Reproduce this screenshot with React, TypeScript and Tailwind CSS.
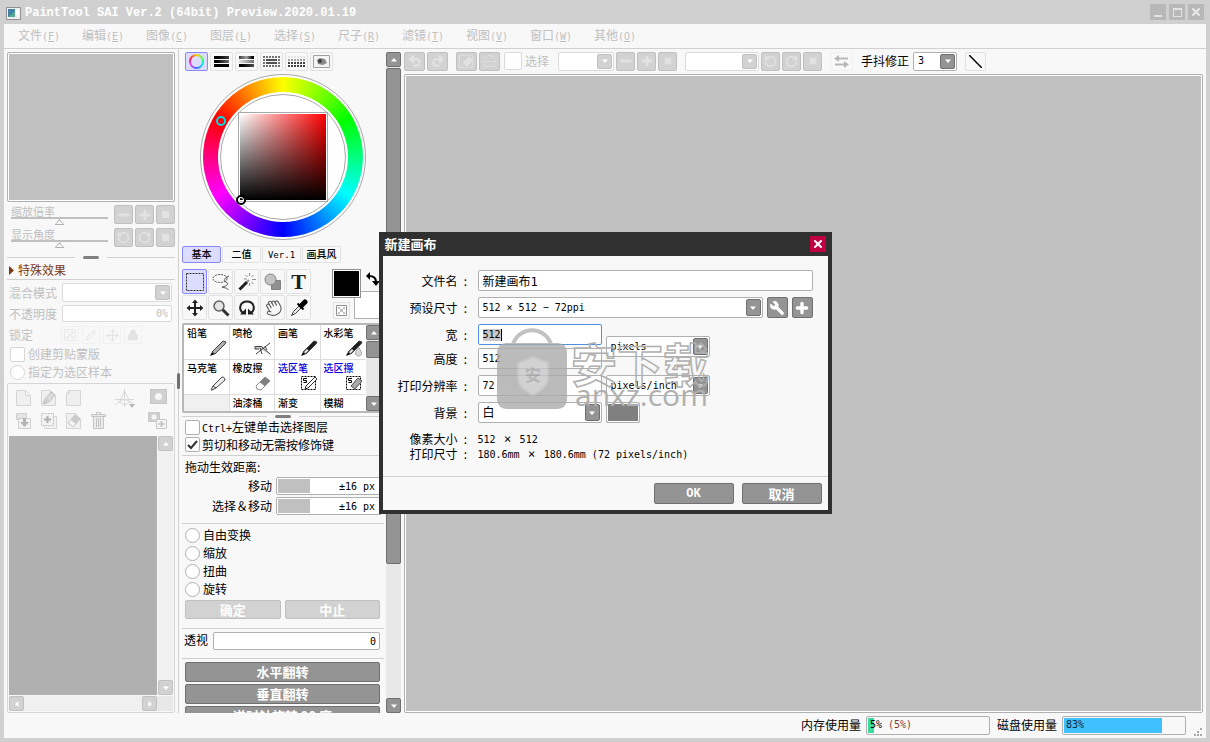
import type { ReactNode } from 'react'
import clsx from 'clsx'
import {
  Hand,
  Lock,
  Minus,
  Move,
  Pencil,
  Plus,
  RotateCcw,
  RotateCw,
  Square,
  Undo2,
  Redo2,
  Wrench,
  X,
} from 'lucide-react'

const menus = [
  ['文件', 'F'],
  ['编辑', 'E'],
  ['图像', 'C'],
  ['图层', 'L'],
  ['选择', 'S'],
  ['尺子', 'R'],
  ['滤镜', 'T'],
  ['视图', 'V'],
  ['窗口', 'W'],
  ['其他', 'O'],
]

function Mono({ children }: { children: ReactNode }) {
  return (
    <span className="font-['DejaVu_Sans_Mono',monospace] text-[10px] whitespace-pre">
      {children}
    </span>
  )
}

function Times() {
  return (
    <span className="inline-block w-3 text-center font-['DejaVu_Sans_Mono',monospace] text-[12px]">
      ×
    </span>
  )
}

function Arrow({ dir = 'down' }: { dir?: 'up' | 'down' | 'left' | 'right' }) {
  return (
    <svg
      viewBox="0 0 6 6"
      className={clsx(
        'size-1.5 shrink-0 fill-white',
        dir === 'up' && 'rotate-180',
        dir === 'left' && 'rotate-90',
        dir === 'right' && '-rotate-90'
      )}
    >
      <path d="M0 1.500h6L3 5z" />
    </svg>
  )
}

function IconButton({
  label,
  active,
  className,
  children,
}: {
  label: string
  active?: boolean
  className?: string
  children: ReactNode
}) {
  return (
    <button
      aria-label={label}
      className={clsx(
        'flex shrink-0 items-center justify-center rounded-xs border',
        active
          ? 'border-[#707070] bg-[#949494] text-white'
          : 'border-[#c0c0c0] bg-[#d2d2d2] text-[#e2e2e2]',
        className
      )}
    >
      {children}
    </button>
  )
}

function Select({
  label,
  value,
  active,
  className,
}: {
  label: string
  value: string
  active?: boolean
  className?: string
}) {
  return (
    <div className={clsx('relative shrink-0', className)}>
      <select
        aria-label={label}
        className={clsx(
          "block size-full appearance-none rounded-xs border bg-white pl-1 font-['DejaVu_Sans_Mono','Noto_Sans_CJK_SC',monospace]",
          value === '白' ? 'text-[12px]' : 'text-[10px]',
          active ? 'border-[#b0b0b0]' : 'border-[#dadada]'
        )}
      >
        <option>{value}</option>
      </select>
      <span
        className={clsx(
          'pointer-events-none absolute inset-y-0.5 right-0.5 flex w-[15px] items-center justify-center rounded-xs border',
          active ? 'border-[#707070] bg-[#949494]' : 'border-[#c0c0c0] bg-[#d2d2d2]'
        )}
      >
        <Arrow />
      </span>
    </div>
  )
}

function Splitter() {
  return (
    <div className="flex h-[7px] items-center gap-2">
      <div className="h-px flex-1 bg-[#d0d0d0]" />
      <div className="h-[3px] w-4 rounded-full bg-[#808080]" />
      <div className="h-px flex-1 bg-[#d0d0d0]" />
    </div>
  )
}

function ViewSlider({ label, rotate }: { label: string; rotate?: boolean }) {
  return (
    <div className="flex h-[23px] items-start justify-between pl-1">
      <label className="block w-[97px] text-[11px] leading-3 text-[#c0c0c0]">
        {label}
        <input
          type="range"
          className="block h-0.5 w-full appearance-none bg-[#c0c0c0] [&::-webkit-slider-thumb]:h-1.5 [&::-webkit-slider-thumb]:w-2.5 [&::-webkit-slider-thumb]:translate-y-1 [&::-webkit-slider-thumb]:appearance-none [&::-webkit-slider-thumb]:bg-[#b0b0b0] [&::-webkit-slider-thumb]:[clip-path:polygon(50%_0,100%_100%,0_100%,10%_85%,85%_85%,50%_25%,15%_85%,0_100%)]"
        />
      </label>
      <div className="flex gap-0.5">
        <IconButton label={rotate ? '左旋转' : '缩小'} className="size-[19px]">
          {rotate ? <RotateCcw size={13} strokeWidth={3} /> : <Minus size={14} strokeWidth={5} />}
        </IconButton>
        <IconButton label={rotate ? '右旋转' : '放大'} className="size-[19px]">
          {rotate ? <RotateCw size={13} strokeWidth={3} /> : <Plus size={14} strokeWidth={5} />}
        </IconButton>
        <IconButton label="重置" className="size-[19px]">
          <span className="size-[7px] bg-current" />
        </IconButton>
      </div>
    </div>
  )
}

function Page({ children }: { children?: ReactNode }) {
  return (
    <svg viewBox="0 0 18 18" className="size-[18px] fill-[#f0f0f0] stroke-[#d6d6d6]">
      <path d="M1.500 1.500h9l5 5v10h-14zM10.500 1.500v5h5" />
      {children}
    </svg>
  )
}

function LayerTools() {
  return (
    <div className="flex h-[51px] justify-between px-[6px] pt-1">
      <div className="grid grid-cols-[repeat(4,25px)] content-start gap-y-[5px]">
        <button aria-label="新建图层" className="size-[18px]">
          <Page />
        </button>
        <button aria-label="新建线稿图层" className="size-[18px]">
          <Page>
            <path d="M3 15l2-5 6-7 4 3-6 7-5 2 4-5" className="fill-[#dcdcdc] stroke-[#bcbcbc]" />
          </Page>
        </button>
        <button aria-label="新建图层组" className="size-[18px]">
          <svg viewBox="0 0 18 18" className="size-[18px] fill-[#efefef] stroke-[#d6d6d6]">
            <path d="M1.500 4.500l2-3h12v15h-14zM4.500 1.500v3h-3" />
          </svg>
        </button>
        <span />
        <button aria-label="向下合并" className="size-[18px]">
          <svg viewBox="0 0 18 18" className="size-[18px] fill-[#e4e4e4] stroke-[#d0d0d0]">
            <path d="M1.500 1.500h10v6h-10z" />
            <path d="M3.500 6.500h12v10h-12z" className="fill-[#f2f2f2]" />
            <path d="M8 6h3v4h3l-4.500 5L5 10h3z" className="fill-[#b4b4b4] stroke-none" />
          </svg>
        </button>
        <button aria-label="复制图层" className="size-[18px]">
          <svg viewBox="0 0 18 18" className="size-[18px] fill-[#f2f2f2] stroke-[#d6d6d6]">
            <path d="M4.500 4.500h12v12h-12z" />
            <path d="M1.500 1.500h12v12h-12z" strokeDasharray="2 1" className="stroke-[#c0c0c0]" />
            <path d="M7.500 4v7M4 7.500h7" strokeWidth="2" className="stroke-[#b0b0b0]" />
          </svg>
        </button>
        <button aria-label="清除图层" className="size-[18px]">
          <Page>
            <path d="M3 11l7-8 5 4-7 8z" className="fill-[#f4f4f4] stroke-[#c4c4c4]" />
            <path d="M6 8l4-5 5 4-4 5z" className="fill-[#cacaca] stroke-none" />
          </Page>
        </button>
        <button aria-label="删除图层" className="size-[18px]">
          <svg viewBox="0 0 18 18" className="size-[18px] fill-[#ececec] stroke-[#c4c4c4]">
            <path d="M6.500 2V.500h4V2" fill="none" />
            <path d="M1.500 2.500h14v2h-14z" />
            <path d="M3.500 4.500h10v12h-10z" />
            <path d="M6.500 6v9M8.500 6v9M10.500 6v9" />
          </svg>
        </button>
      </div>
      <div className="flex gap-[13px]">
        <svg viewBox="0 0 20 20" className="size-5 fill-none stroke-[#d8d8d8]">
          <path d="M9.500 0v18M0 10.500h19M9.500 2L5 12l-5 4M9.500 2l5 10 5 4M4 13l5.500-3 5.500 3-5.500 3z" />
          <path d="M14 15h6l-3 4z" className="fill-[#b8b8b8] stroke-none" />
        </svg>
        <div className="flex flex-col items-end gap-2">
          <button aria-label="图层蒙版" className="flex h-[15px] w-[17px] items-center justify-center border border-[#c6c6c6] bg-[#d0d0d0]">
            <span className="size-[7px] rounded-full bg-[#f6f6f6]" />
          </button>
          <svg viewBox="0 0 19 17" className="h-[17px] w-[19px] fill-[#d0d0d0] stroke-[#c8c8c8]">
            <path d="M.5.5h11v9H.5z" />
            <circle cx="6" cy="5" r="2.500" className="fill-[#f6f6f6] stroke-none" />
            <path d="M8.500 7.500h10v9h-10z" className="fill-[#f4f4f4]" />
            <path d="M13.500 9v6M10.500 12h6" strokeWidth="2" />
          </svg>
        </div>
      </div>
    </div>
  )
}

function LeftPanel() {
  return (
    <aside className="relative flex w-[175px] shrink-0 flex-col border-r border-[#d0d0d0] px-[3px] pt-[3px] text-[#c0c0c0]">
      <div className="h-[150px] shrink-0 rounded-xs border border-[#b0b0b0] bg-[#c0c0c0] outline-1 -outline-offset-2 outline-white" />
      <div className="mt-[3px]">
        <ViewSlider label="缩放倍率" />
        <ViewSlider label="显示角度" rotate />
      </div>
      <div className="mt-[3px]">
        <Splitter />
      </div>
      <button className="flex h-[19px] items-center gap-1 border-b border-[#d0d0d0] pl-0.5 text-left text-[12px] leading-3 text-[#7a3a14]">
        <svg viewBox="0 0 5 9" className="h-[9px] w-[5px] fill-current">
          <path d="M0 0l5 4.500L0 9z" />
        </svg>
        特殊效果
      </button>
      <div className="mt-[3px] flex h-[19px] items-center justify-between pr-[3px] pl-0.5">
        <span>混合模式</span>
        <Select label="混合模式" value="" className="h-[19px] w-[110px]" />
      </div>
      <label className="mt-[3px] flex h-[17px] items-center justify-between pr-[3px] pl-0.5">
        不透明度
        <input
          defaultValue="0%"
          className="h-[17px] w-[110px] rounded-xs border border-[#dadada] bg-white pr-[3px] text-right font-['DejaVu_Sans_Mono',monospace] text-[10px]"
        />
      </label>
      <div className="mt-[3px] flex h-5 items-center pl-0.5">
        锁定
        <div className="ml-7 flex gap-[3px] text-[#e4e4e4]">
          <button aria-label="锁定透明" className="flex size-[18px] items-center justify-center border border-[#f1f1f1]">
            <svg viewBox="0 0 12 12" className="size-3 fill-[#ebebeb] stroke-[#e8e8e8]">
              <path d="M.5.5h11v11H.5z" className="fill-none" />
              <path d="M2 2h2v2H2zM7 2h3v3H7zM4.500 4.500h3v3h-3zM2 7h3v3H2zM7 7h3v3H7z" className="stroke-none" />
            </svg>
          </button>
          <button aria-label="锁定绘画" className="flex size-[18px] items-center justify-center border border-[#f1f1f1]">
            <Pencil size={12} />
          </button>
          <button aria-label="锁定移动" className="flex size-[18px] items-center justify-center border border-[#f1f1f1]">
            <Move size={13} />
          </button>
          <button aria-label="全部锁定" className="flex size-[18px] items-center justify-center border border-[#f1f1f1]">
            <Lock size={12} fill="currentColor" />
          </button>
        </div>
      </div>
      <label className="flex h-[18px] items-center gap-[3px] pl-[3px]">
        <input type="checkbox" className="size-[15px] appearance-none rounded-xs border border-[#d6d6d6] bg-white" />
        创建剪贴蒙版
      </label>
      <label className="flex h-[18px] items-center gap-[3px] pl-[3px]">
        <input type="radio" className="size-[15px] appearance-none rounded-full border border-[#d6d6d6] bg-white" />
        指定为选区样本
      </label>
      <div className="mt-[2px] flex min-h-0 flex-1 flex-col rounded-xs border border-[#d6d6d6] p-px">
        <LayerTools />
        <div className="flex min-h-0 flex-1">
          <div className="flex-1 bg-[#b0b0b0]" />
          <div className="ml-px flex w-[15px] flex-col justify-between bg-[#f0f0f0]">
            <IconButton label="向上" className="size-[15px]">
              <Arrow dir="up" />
            </IconButton>
            <IconButton label="向下" className="size-[15px]">
              <Arrow />
            </IconButton>
          </div>
        </div>
        <div className="mt-px flex h-[15px]">
          <div className="flex flex-1 justify-between bg-[#f0f0f0]">
            <IconButton label="向左" className="size-[15px]">
              <Arrow dir="left" />
            </IconButton>
            <IconButton label="向右" className="size-[15px]">
              <Arrow dir="right" />
            </IconButton>
          </div>
          <div className="w-4 bg-[#e8e8e8]" />
        </div>
      </div>
      <div className="absolute top-[324px] -right-[2px] h-4 w-[3px] rounded-full bg-[#707070]" />
    </aside>
  )
}

function ColorWheel() {
  return (
    <div className="relative mx-auto mt-[2px] flex size-[168px] items-center justify-center">
      <div className="flex size-[166px] items-center justify-center rounded-full border border-[#a8a8a8] bg-white">
        <div className="flex size-40 items-center justify-center rounded-full bg-[conic-gradient(#ff0,#0f0,#0ff,#00f,#f0f,#f00,#ff0)]">
          <div className="flex size-[130px] items-center justify-center rounded-full bg-white">
            <div className="flex size-[126px] items-center justify-center rounded-full border border-[#a8a8a8]">
              <div className="size-[90px] shrink-0 border border-[#a8a8a8] bg-white p-px">
                <div className="size-full bg-[linear-gradient(to_top,#000,transparent),linear-gradient(to_right,#fff,#f00)]" />
              </div>
            </div>
          </div>
        </div>
      </div>
      <div className="absolute top-[43px] left-[17px] size-[10px] rounded-full border-2 border-[#00dce8]" />
      <div className="absolute top-[122px] left-[37px] size-[10px] rounded-full border-2 border-black outline-1 -outline-offset-3 outline-white" />
    </div>
  )
}

const colorModes: [string, ReactNode][] = [
  [
    '色轮',
    <span className="flex size-[15px] items-center justify-center rounded-full bg-[conic-gradient(#fc0,#4f4,#0df,#46f,#d4f,#f24,#fc0)]">
      <span className="size-[11px] rounded-full bg-[#dcdcff]" />
    </span>,
  ],
  [
    'RGB滑块',
    <span className="flex w-[15px] flex-col gap-px">
      <span className="h-[3px] bg-linear-to-r from-black to-neutral-700" />
      <span className="h-[3px] bg-linear-to-r from-black to-neutral-500" />
      <span className="h-[3px] bg-black" />
    </span>,
  ],
  [
    'HSV滑块',
    <span className="flex w-[15px] flex-col gap-px">
      <span className="h-[3px] bg-linear-to-r from-neutral-700 via-neutral-400 to-black" />
      <span className="h-[3px] bg-linear-to-r from-neutral-200 to-neutral-500" />
      <span className="h-[3px] bg-linear-to-r from-black to-neutral-600" />
    </span>,
  ],
  [
    '中间色',
    <svg viewBox="0 0 17 11" className="h-[11px] w-[17px]">
      <path d="M0 1h17M0 10h17" strokeWidth="2" strokeDasharray="2 1" className="stroke-neutral-500" />
      <path d="M0 4h2M15 4h2M0 7h2M15 7h2" strokeWidth="2" className="stroke-neutral-500" />
      <path d="M3 4h11M3 7h11" strokeWidth="2" className="stroke-neutral-600" />
    </svg>,
  ],
  [
    '色板',
    <svg viewBox="0 0 17 11" className="h-[11px] w-[17px]">
      <path d="M0 1h17" strokeWidth="2" strokeDasharray="2 1" className="stroke-neutral-200" />
      <path d="M0 4h17" strokeWidth="2" strokeDasharray="2 1" className="stroke-neutral-400" />
      <path d="M0 7h17M0 10h17" strokeWidth="2" strokeDasharray="2 1" className="stroke-neutral-700" />
    </svg>,
  ],
  [
    '调色盘',
    <svg viewBox="0 0 17 13" className="h-[13px] w-[17px]">
      <path d="M.5.5h16v12H.5z" className="fill-[#f4f4f4] stroke-[#a0a0a0]" />
      <path d="M4 5l3-2 5 1 2 4-4 2-5-1z" className="fill-[#8a8a8a]" />
      <circle cx="7" cy="6" r="2" className="fill-[#404040]" />
    </svg>,
  ],
]

const tools: [string, ReactNode][] = [
  [
    '矩形选择',
    <svg viewBox="0 0 18 18" className="size-[18px] fill-none stroke-[#303030]">
      <path d="M.5.5h17v17H.5z" strokeDasharray="2 1" />
    </svg>,
  ],
  [
    '套索',
    <svg viewBox="0 0 18 18" className="size-[18px] fill-none stroke-[#505050]">
      <ellipse cx="8" cy="5.500" rx="7" ry="4" strokeDasharray="2 1" />
      <path d="M17 3c-5 2-6 5-3 6s2 4-4 5c3 1 6 1 6 3" />
    </svg>,
  ],
  [
    '魔棒',
    <svg viewBox="0 0 18 18" className="size-[18px] fill-none stroke-[#202020]">
      <path d="M1.500 16.500L9 9" strokeWidth="3" />
      <path d="M9 9l2-2" strokeWidth="2" className="stroke-[#909090]" />
      <path d="M11.500 0v3M11.500 10v3M6 6h3M14 6.500h4M7.500 2l2 2M15.500 2l-2 2M13.500 9l2 2" className="stroke-[#909090]" />
    </svg>,
  ],
  [
    '形状',
    <svg viewBox="0 0 18 18" className="size-[18px] stroke-[#808080]">
      <path d="M7.500 7.500h9v9h-9z" className="fill-[#909090]" />
      <circle cx="6.500" cy="6.500" r="5.500" className="fill-[#c4c4c4]" />
    </svg>,
  ],
  ['文字', <span className="font-['Liberation_Serif',serif] text-[22px] leading-none font-bold">T</span>],
  [
    '移动',
    <svg viewBox="0 0 18 18" className="size-[18px] fill-[#202020] stroke-[#202020]">
      <path d="M9 2v14M2 9h14" strokeWidth="2" />
      <path d="M9 .5L12 4H6zM9 17.500L12 14H6zM.5 9L4 6v6zM17.500 9L14 6v6z" className="stroke-none" />
    </svg>,
  ],
  [
    '缩放',
    <svg viewBox="0 0 18 18" className="size-[18px]">
      <path d="M10 10l6.500 6.500" strokeWidth="3" className="stroke-[#303030]" />
      <circle cx="7" cy="7" r="5" strokeWidth="1.500" className="fill-[#e4e4e4] stroke-[#606060]" />
    </svg>,
  ],
  [
    '旋转',
    <svg viewBox="0 0 18 18" className="size-[18px]">
      <path d="M5 14C0 10 2 2.500 9 2.500s9 7.500 4 11.500" fill="none" strokeWidth="2" className="stroke-[#202020]" />
      <path d="M2 15.500h6v-6zM16 15.500h-6v-6z" className="fill-[#202020]" />
    </svg>,
  ],
  ['抓手', <Hand size={18} strokeWidth={1.500} color="#606060" className="-rotate-30" />],
  [
    '吸管',
    <svg viewBox="0 0 18 18" className="size-[18px]">
      <path d="M1.500 16.500l2-4 6-6 2 2-6 6z" className="fill-[#e8e8e8] stroke-[#404040]" />
      <path d="M7.500 4.500l6 6" strokeWidth="2" className="stroke-black" />
      <path d="M11.500 6.500L15 3" strokeWidth="5" strokeLinecap="round" className="stroke-black" />
    </svg>,
  ],
]

function PenIcon({ dark, drop }: { dark?: boolean; drop?: boolean }) {
  return (
    <svg viewBox="0 0 18 18" className="size-[18px]">
      <path d="M1 17l2-4 3 2z" className="fill-black" />
      <path
        d="M3 13L14 2l3 1-1 2L6 15z"
        className={clsx(dark ? 'fill-[#202020]' : 'fill-[#b0b0b0]', 'stroke-[#404040]')}
      />
      {dark && <path d="M4 13l3-3 1.500 1.500-3 3z" className="fill-[#e8e8e8]" />}
      {drop && <path d="M13.500 8c-5 7-3 9 0 9s5-2 0-9z" className="fill-[#d8d8d8] stroke-[#a8a8a8]" />}
    </svg>
  )
}

function SelIcon({ eraser }: { eraser?: boolean }) {
  return (
    <svg viewBox="0 0 18 18" className="size-[18px] fill-none stroke-black">
      <path d="M1.500 2.500h14v13h-14z" strokeDasharray="2 1" />
      <path d="M7 4.500H3.500v2h3v2h-3" />
      {eraser ? (
        <path d="M6 12l7-8 4 3-7 8z" className="fill-[#a8a8a8] stroke-[#505050]" />
      ) : (
        <path d="M5 15l1-3 9-9 2 2-9 9z" className="fill-white stroke-[#303030]" />
      )}
    </svg>
  )
}

const brushes: { name: string; icon?: ReactNode; sel?: boolean }[] = [
  { name: '铅笔', icon: <PenIcon /> },
  {
    name: '喷枪',
    icon: (
      <svg viewBox="0 0 18 18" className="size-[18px] fill-[#c8c8c8] stroke-[#404040]">
        <path d="M1.500 7.500h6l9 8M2 15L16 4M6 9l2 6M1 7v3h4M11 7l2 4" />
      </svg>
    ),
  },
  { name: '画笔', icon: <PenIcon dark /> },
  { name: '水彩笔', icon: <PenIcon dark drop /> },
  {
    name: '马克笔',
    icon: (
      <svg viewBox="0 0 18 18" className="size-[18px] fill-[#f0f0f0] stroke-[#404040]">
        <path d="M2 16l2-4 9-9c2 0 3 1 3 3l-9 8-4 2zM4 12l3 2" />
      </svg>
    ),
  },
  {
    name: '橡皮擦',
    icon: (
      <svg viewBox="0 0 18 18" className="size-[18px] fill-white stroke-[#909090]">
        <path d="M2 12l9-9 5 4-9 9-4-1z" />
        <path d="M6 8l5-5 5 4-5 5z" className="fill-[#808080]" />
      </svg>
    ),
  },
  { name: '选区笔', icon: <SelIcon />, sel: true },
  { name: '选区擦', icon: <SelIcon eraser />, sel: true },
  { name: '' },
  { name: '油漆桶' },
  { name: '渐变' },
  { name: '模糊' },
]

function DistanceField({ label }: { label: string }) {
  return (
    <label className="mb-0.5 flex h-[18px] items-center justify-end gap-1">
      {label}
      <input
        defaultValue="±16 px"
        className="h-[18px] w-[106px] rounded-xs border border-[#b0b0b0] bg-white bg-[linear-gradient(#c0c0c0,#c0c0c0)] bg-[length:32px_14px] bg-[position:1px_1px] bg-no-repeat pr-1.5 text-right font-['DejaVu_Sans_Mono',monospace] text-[10px]"
      />
    </label>
  )
}

function ToolPanel() {
  return (
    <section className="flex w-[225px] shrink-0 pt-[3px] pl-[3px]">
      <div className="w-[202px] overflow-hidden">
        <div className="flex gap-[2px] pl-[3px]">
          {colorModes.map(([label, icon], i) => (
            <button
              key={label}
              aria-label={label}
              className={clsx(
                'flex h-[19px] w-[23px] items-center justify-center rounded-xs border',
                i === 0 ? 'border-[#8888f8] bg-[#dcdcff]' : 'border-[#e2e2e2]'
              )}
            >
              {icon}
            </button>
          ))}
        </div>
        <ColorWheel />
        <div className="mt-[5px] flex gap-px">
          {['基本', '二值', 'Ver.1', '画具风'].map((tab, i) => (
            <button
              key={tab}
              className={clsx(
                "h-[17px] w-[39px] rounded-xs border font-['DejaVu_Sans_Mono','Noto_Sans_CJK_SC',monospace] leading-3 font-medium",
                tab === 'Ver.1' ? 'text-[9px]' : 'text-[10px]',
                i === 0 ? 'border-[#8888f8] bg-[#dcdcff]' : 'border-[#e2e2e2]'
              )}
            >
              {tab}
            </button>
          ))}
        </div>
        <div className="mt-1.5 flex h-[51px] items-start">
          <div className="grid grid-cols-[repeat(5,25px)] gap-px">
            {tools.map(([label, icon], i) => (
              <button
                key={label}
                aria-label={label}
                className={clsx(
                  'flex size-[25px] items-center justify-center rounded-xs border text-[#202020]',
                  i === 0 ? 'border-[#8888f8] bg-[#dcdcff]' : 'border-[#e2e2e2]'
                )}
              >
                {icon}
              </button>
            ))}
          </div>
          <div className="relative ml-[21px] h-[51px] flex-1">
            <div className="absolute top-[22px] left-[22px] size-7 border border-[#b0b0b0] bg-white" />
            <div className="relative size-[29px] border border-[#909090] bg-black outline-1 -outline-offset-2 outline-white" />
            <button aria-label="交换颜色" className="absolute top-[3px] left-[34px]">
              <svg viewBox="0 0 14 14" className="size-[14px] fill-black">
                <path d="M0 4l4-4v8zM6 9h8l-4 5z" />
                <path d="M3 4c5 0 7 2 7 6" fill="none" stroke="#000" strokeWidth="2" />
              </svg>
            </button>
            <button aria-label="透明色" className="absolute top-[33px] left-px flex size-[17px] items-center justify-center border border-[#e2e2e2] bg-[#f8f8f8]">
              <svg viewBox="0 0 11 11" className="size-[11px]">
                <path d="M.5.5h10v10H.5z" className="fill-white stroke-[#909090]" />
                <path d="M2 2h2v2H2zM7 2h2v2H7zM4 4h3v3H4zM2 7h2v2H2zM7 7h2v2H7z" className="fill-[#c0c0c0]" />
              </svg>
            </button>
          </div>
        </div>
        <div className="mt-[3px] flex h-[90px] rounded-xs border-2 border-[#b8b8b8] bg-white">
          <div className="grid h-full flex-1 auto-rows-[34px] grid-cols-4 gap-px overflow-hidden bg-[#dcdcdc]">
            {brushes.map((b) => (
              <button
                key={b.name}
                className={clsx(
                  'relative flex items-start pl-[3px] text-left text-[10px] leading-4 font-medium',
                  b.name ? 'bg-white' : 'bg-[#f0f0f0]',
                  b.sel && 'text-[#0000e0]'
                )}
              >
                {b.name}
                <span className="absolute right-0.5 bottom-0.5">{b.icon}</span>
              </button>
            ))}
          </div>
          <div className="ml-px flex w-4 flex-col bg-[#e8e8e8]">
            <IconButton label="向上" active className="h-[15px]">
              <Arrow dir="up" />
            </IconButton>
            <div className="mt-px h-[17px] rounded-xs border border-[#707070] bg-[#949494]" />
            <IconButton label="向下" active className="mt-auto h-[15px]">
              <Arrow />
            </IconButton>
          </div>
        </div>
        <Splitter />
        <div className="pr-1 pl-[3px]">
          <label className="flex h-[15px] items-center gap-0.5">
            <input type="checkbox" className="size-[15px] appearance-none rounded-xs border border-[#b0b0b0] bg-white" />
            <span>
              <Mono>Ctrl+</Mono>左键单击选择图层
            </span>
          </label>
          <label className="mt-[2px] flex h-[15px] items-center gap-0.5">
            <input
              type="checkbox"
              defaultChecked
              className="size-[15px] appearance-none rounded-xs border border-[#b0b0b0] bg-white"
            />
            <svg viewBox="0 0 15 15" className="pointer-events-none -ml-[17px] size-[15px] fill-none stroke-[#303030]" strokeWidth="2">
              <path d="M3 8l3 3 6-7" />
            </svg>
            剪切和移动无需按修饰键
          </label>
        </div>
        <div className="mt-[3px] h-[69px] border-y border-[#d0d0d0] pr-[2px] pl-[3px]">
          <p className="h-[21px] leading-[21px]">拖动生效距离:</p>
          <DistanceField label="移动" />
          <DistanceField label="选择＆移动" />
        </div>
        <div className="mt-[2px] h-[103px] border-b border-[#d0d0d0] pr-1 pl-[3px]">
          {['自由变换', '缩放', '扭曲', '旋转'].map((mode) => (
            <label key={mode} className="flex h-[18px] items-center gap-[3px]">
              <input
                type="radio"
                name="transform"
                className="size-[15px] appearance-none rounded-full border border-[#b0b0b0] bg-white"
              />
              {mode}
            </label>
          ))}
          <div className="mt-[2px] flex gap-1">
            {['确定', '中止'].map((t) => (
              <button
                key={t}
                className="h-[19px] flex-1 rounded-xs border border-[#c0c0c0] bg-[#d2d2d2] text-[13px] leading-4 font-bold text-white"
              >
                {t}
              </button>
            ))}
          </div>
        </div>
        <label className="flex h-[30px] items-start gap-[5px] border-b border-[#d0d0d0] pt-[3px] pr-1 pl-0.5">
          透视
          <input
            defaultValue="0"
            className="h-[18px] min-w-0 flex-1 rounded-xs border border-[#b0b0b0] bg-white pr-[3px] text-right font-['DejaVu_Sans_Mono',monospace] text-[10px]"
          />
        </label>
        <div className="mt-[3px] flex flex-col gap-0.5 pr-1 pl-[3px]">
          {['水平翻转', '垂直翻转', '逆时针旋转 90 度'].map((t) => (
            <button
              key={t}
              className="h-5 rounded-xs border border-[#707070] bg-[#949494] text-[13px] leading-[18px] font-bold text-white"
            >
              {t}
            </button>
          ))}
        </div>
      </div>
      <div className="ml-[2px] flex w-[15px] flex-col bg-[#e8e8e8]">
        <IconButton label="向上" active className="size-[15px]">
          <Arrow dir="up" />
        </IconButton>
        <div className="mt-px h-3/4 rounded-xs border border-[#707070] bg-[#949494]" />
        <IconButton label="向下" active className="mt-auto size-[15px]">
          <Arrow />
        </IconButton>
      </div>
    </section>
  )
}

function Toolbar() {
  return (
    <div className="flex h-[25px] items-center pb-px">
      <div className="flex gap-0.5">
        <IconButton label="撤销" className="h-[19px] w-[21px]">
          <Undo2 size={14} strokeWidth={4} />
        </IconButton>
        <IconButton label="重做" className="h-[19px] w-[21px]">
          <Redo2 size={14} strokeWidth={4} />
        </IconButton>
      </div>
      <div className="ml-2 flex gap-0.5">
        <IconButton label="取消选择" className="h-[19px] w-[21px]">
          <svg viewBox="0 0 15 13" className="h-[13px] w-[15px] fill-none stroke-current">
            <path d="M.5.5h13v12H.5z" strokeDasharray="2 1" />
            <path d="M4 8l6-6 4 3-6 6z" className="fill-current" />
          </svg>
        </IconButton>
        <IconButton label="反选" className="h-[19px] w-[21px]">
          <svg viewBox="0 0 15 13" className="h-[13px] w-[15px] fill-none stroke-current">
            <path d="M0 6.500h15" strokeDasharray="2 1" />
            <path d="M2.500 4.500a5 4 0 0 1 10 0M2.500 8.500v3h10v-3" strokeDasharray="3 1" />
          </svg>
        </IconButton>
      </div>
      <label className="ml-1 flex items-center gap-[3px] text-[#c0c0c0]">
        <input type="checkbox" className="size-[18px] appearance-none rounded-xs border border-[#dadada] bg-white" />
        选择
      </label>
      <Select label="缩放" value="" className="ml-[9px] h-[19px] w-14" />
      <div className="ml-[2px] flex gap-0.5">
        <IconButton label="缩小" className="size-[19px]">
          <Minus size={14} strokeWidth={5} />
        </IconButton>
        <IconButton label="放大" className="size-[19px]">
          <Plus size={14} strokeWidth={5} />
        </IconButton>
        <IconButton label="重置缩放" className="size-[19px]">
          <Square size={8} fill="currentColor" />
        </IconButton>
      </div>
      <Select label="角度" value="" className="ml-2 h-[19px] w-[74px]" />
      <div className="ml-[2px] flex gap-0.5">
        <IconButton label="左旋转" className="size-[19px]">
          <RotateCcw size={13} strokeWidth={3} />
        </IconButton>
        <IconButton label="右旋转" className="size-[19px]">
          <RotateCw size={13} strokeWidth={3} />
        </IconButton>
        <IconButton label="重置角度" className="size-[19px]">
          <Square size={8} fill="currentColor" />
        </IconButton>
      </div>
      <button aria-label="水平翻转视图" className="ml-2 flex h-[19px] w-[23px] items-center justify-center border border-[#f1f1f1]">
        <svg viewBox="0 0 15 13" className="h-[13px] w-[15px] fill-[#b8b8b8]">
          <path d="M0 3.500L5 0v2.500h9v2H5V7zM15 9.500L10 6v2.500H1v2h9V13z" />
        </svg>
      </button>
      <span className="ml-2">手抖修正</span>
      <Select label="手抖修正" value="3" active className="ml-1 h-[19px] w-11" />
      <button aria-label="直线" className="ml-2 flex h-[19px] w-[21px] items-center justify-center rounded-xs border border-[#e0e0e0]">
        <svg viewBox="0 0 13 13" className="size-[13px] stroke-black">
          <path d="M0 0l13 13" strokeWidth="1.500" />
        </svg>
      </button>
    </div>
  )
}

function StatusBar() {
  return (
    <footer className="flex h-[25px] shrink-0 items-center justify-end pr-[3px] pb-px">
      内存使用量
      <div className="relative ml-[5px] flex h-[19px] w-[124px] items-center rounded-xs border border-[#b0b0b0] p-px">
        <div className="h-full w-[5%] bg-[#38dc98]" />
        <span className="absolute left-[3px] font-['DejaVu_Sans_Mono',monospace] text-[10px] whitespace-pre">
          {'5% '}
          <span className="text-[#804030]">(5%)</span>
        </span>
      </div>
      <span className="ml-[7px]">磁盘使用量</span>
      <div className="relative ml-[5px] flex h-[19px] w-[124px] items-center rounded-xs border border-[#b0b0b0] p-px">
        <div className="h-full w-[82%] bg-[#40c0ff]" />
        <span className="absolute left-[3px] font-['DejaVu_Sans_Mono',monospace] text-[10px] text-[#102840]">83%</span>
      </div>
      <svg viewBox="0 0 9 9" className="ml-2 size-[9px] self-end fill-[#a8a8a8]">
        <path d="M6 0h2v2H6zM3 3h2v2H3zM6 6h2v2H6zM0 6h2v2H0zM3 6h2v2H3z" />
      </svg>
    </footer>
  )
}

function Label({ text }: { text: string }) {
  return (
    <span className="flex w-[87px] shrink-0 justify-end">
      {text}
      <span className="w-5 pr-1 text-center">:</span>
    </span>
  )
}

const field =
  "h-[21px] rounded-xs border border-[#b0b0b0] bg-white pl-1 font-['DejaVu_Sans_Mono','Noto_Sans_CJK_SC',monospace]"

function Watermark() {
  return (
    <svg
      viewBox="0 0 214 84"
      className="pointer-events-none absolute top-[96px] left-[113px] h-[84px] w-[214px]"
    >
      <g className="opacity-80">
        <path d="M17 16a20 20 0 0 1 38 0" fill="none" stroke="#b4b4b4" strokeWidth="4" />
        <rect x="1" y="15" width="70" height="66" rx="9" fill="#ababab" />
        <path d="M37 29l15 6v15c0 8-7 13-15 17-8-4-15-9-15-17V35z" fill="#c8c8c8" stroke="#bbb" strokeWidth="2" />
        <text x="29" y="53" fontSize="16" fontWeight="bold" fill="#a4a4a4" className="font-['Noto_Sans_CJK_SC',sans-serif]">
          安
        </text>
      </g>
      <text x="75" y="54" fontSize="46" fontWeight="bold" fill="none" stroke="#b0b0b0" strokeWidth="1.500" className="font-['Noto_Sans_CJK_SC',sans-serif]">
        安下载
      </text>
      <text x="79" y="78" fontSize="30" fill="#b0b0b0" className="font-['Open_Sans',sans-serif]">
        anxz.com
      </text>
    </svg>
  )
}

function NewCanvasDialog() {
  return (
    <div className="pointer-events-none fixed inset-0 flex items-center justify-center pt-1">
      <div
        role="dialog"
        aria-label="新建画布"
        className="pointer-events-auto relative w-[453px] border-4 border-t-0 border-[#303030] bg-[#f8f8f8]"
      >
        <div className="flex h-6 items-center justify-between bg-[#303030] pr-[2px] pl-0.5">
          <h2 className="text-[13px] font-bold text-white">新建画布</h2>
          <button aria-label="关闭" className="flex size-4 items-center justify-center bg-[#c00040] text-white">
            <X size={12} strokeWidth={4} />
          </button>
        </div>
        <div className="flex flex-col gap-1.5 px-[15px] pt-[14px] pl-2">
          <label className="flex items-center">
            <Label text="文件名" />
            <input defaultValue="新建画布1" className={clsx(field, 'min-w-0 flex-1 text-[12px]')} />
          </label>
          <div className="flex items-center gap-1">
            <div className="flex flex-1 items-center">
              <Label text="预设尺寸" />
              <Select label="预设尺寸" value="512 × 512 − 72ppi" active className="h-[21px] grow" />
            </div>
            <IconButton label="设置" active className="size-[21px]">
              <Wrench size={16} fill="currentColor" strokeWidth={1} className="-scale-x-100" />
            </IconButton>
            <IconButton label="添加" active className="size-[21px]">
              <Plus size={16} strokeWidth={5} />
            </IconButton>
          </div>
          <div className="flex items-center gap-1">
            <div className="flex flex-col gap-[3px]">
              <label className="flex items-center">
                <Label text="宽" />
                <span className="flex h-[21px] w-[124px] items-center rounded-xs border border-[#5090e0] bg-white pl-1">
                  <input
                    defaultValue="512"
                    className="w-[19px] border-r border-black bg-[#c8c8c8] font-['DejaVu_Sans_Mono',monospace] text-[10px] leading-3 outline-none"
                  />
                </span>
              </label>
              <label className="flex items-center">
                <Label text="高度" />
                <input defaultValue="512" className={clsx(field, 'w-[124px] text-[10px]')} />
              </label>
            </div>
            <Select label="单位" value="pixels" active className="h-[21px] w-[104px]" />
          </div>
          <div className="flex items-center gap-1">
            <label className="flex items-center">
              <Label text="打印分辨率" />
              <input defaultValue="72" className={clsx(field, 'w-[124px] text-[10px]')} />
            </label>
            <Select label="分辨率单位" value="pixels/inch" active className="h-[21px] w-[104px]" />
          </div>
          <div className="flex items-center gap-1">
            <div className="flex items-center">
              <Label text="背景" />
              <Select label="背景" value="白" active className="h-[21px] w-[124px]" />
            </div>
            <button aria-label="背景颜色" className="h-[21px] w-[34px] rounded-xs border border-[#b0b0b0] bg-[#808080] outline-1 -outline-offset-2 outline-white" />
          </div>
        </div>
        <div className="mt-2 pb-[15px] pl-2 leading-[15px]">
          <p className="flex h-[15px] items-center">
            <Label text="像素大小" />
            <span>
              <Mono>512 </Mono>
              <Times />
              <Mono> 512</Mono>
            </span>
          </p>
          <p className="flex h-[15px] items-center">
            <Label text="打印尺寸" />
            <span>
              <Mono>180.6mm </Mono>
              <Times />
              <Mono> 180.6mm (72 pixels/inch)</Mono>
            </span>
          </p>
        </div>
        <div className="flex justify-end gap-2 border-t border-[#d0d0d0] px-1.5 py-1.5">
          {['OK', '取消'].map((t) => (
            <button
              key={t}
              className={clsx(
                'h-[21px] w-20 rounded-xs border border-[#707070] bg-[#949494] font-bold text-white',
                t === 'OK'
                  ? "font-['Liberation_Mono',monospace] text-[12px]"
                  : 'text-[13px] leading-[18px]'
              )}
            >
              {t}
            </button>
          ))}
        </div>
        <Watermark />
      </div>
    </div>
  )
}

export default function App() {
  return (
    <div className="flex h-screen flex-col border-x-4 border-b-4 border-[#d0d0d0] bg-[#f8f8f8] font-['Noto_Sans_CJK_SC',sans-serif] text-[12px] leading-4 text-black">
      <header className="flex h-6 shrink-0 items-center bg-[#d0d0d0] pr-[2px] pl-[2px] text-white">
        <svg viewBox="0 0 15 13" className="mt-0.5 mr-1 h-[13px] w-[15px]">
          <path d="M.5.5h14v12H.5z" className="fill-[#f0f0f0] stroke-[#909090]" />
          <path d="M2 2h7v8H2z" className="fill-[#4080a0]" />
          <path d="M2 10l7-6v6z" className="fill-[#50a890]" />
          <path d="M10 3h3v5h-3z" className="fill-white" />
        </svg>
        <h1 className="flex-1 pt-0.5 font-['Liberation_Mono',monospace] text-[12px] font-bold">
          PaintTool SAI Ver.2 (64bit) Preview.2020.01.19
        </h1>
        <div className="flex gap-[3px]">
          <button aria-label="最小化" className="flex size-4 items-end justify-center bg-[#b8b8b8] pb-[3px]">
            <span className="h-0.5 w-2 bg-[#e4e4e4]" />
          </button>
          <button aria-label="最大化" className="flex size-4 items-center justify-center bg-[#b8b8b8]">
            <span className="size-[9px] border border-t-2 border-[#e4e4e4]" />
          </button>
          <button aria-label="关闭窗口" className="flex size-4 items-center justify-center bg-[#b8b8b8] text-[#e8e8e8]">
            <X size={12} strokeWidth={4} />
          </button>
        </div>
      </header>
      <nav className="flex h-[25px] shrink-0 items-center border-b border-[#d0d0d0] pl-[14px] text-[#c0c0c0]">
        {menus.map(([name, key]) => (
          <button key={key} className="w-16 text-left">
            {name}
            <Mono>
              (<u>{key}</u>)
            </Mono>
          </button>
        ))}
      </nav>
      <div className="flex min-h-0 flex-1">
        <LeftPanel />
        <ToolPanel />
        <main className="flex min-w-0 flex-1 flex-col pr-[3px]">
          <Toolbar />
          <div className="flex-1 rounded-xs border border-[#b0b0b0] bg-[#c0c0c0] outline-1 -outline-offset-2 outline-white" />
        </main>
      </div>
      <StatusBar />
      <NewCanvasDialog />
    </div>
  )
}
